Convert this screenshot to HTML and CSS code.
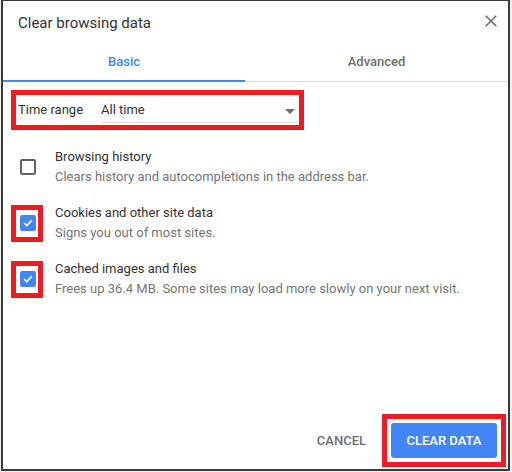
FILE: index.html
```html
<!DOCTYPE html>
<html lang="en">
<head>
<meta charset="utf-8">
<title>Clear browsing data</title>
<link rel="stylesheet" href="styles.css">
</head>
<body>
<div class="dialog">
  <div class="title-row">
    <span class="title">Clear browsing data</span>
    <svg class="close" width="12" height="12" viewBox="0 0 12 12" aria-label="Close">
      <path d="M0.7 0.7 L11.3 11.3 M11.3 0.7 L0.7 11.3" stroke="#6b6b6b" stroke-width="1.6" fill="none"/>
    </svg>
  </div>
  <div class="tabs">
    <div class="tab tab-active">Basic</div>
    <div class="tab">Advanced</div>
  </div>
  <div class="time-row highlight">
    <span class="time-label">Time range</span>
    <div class="select">
      <span>All time</span>
      <span class="arrow"></span>
    </div>
  </div>
  <div class="item">
    <div class="cb-wrap"><span class="cb"></span></div>
    <div class="item-text">
      <div class="item-title">Browsing history</div>
      <div class="item-sub">Clears history and autocompletions in the address bar.</div>
    </div>
  </div>
  <div class="item">
    <div class="cb-wrap highlight"><span class="cb cb-on"><svg width="12" height="12" viewBox="0 0 12 12"><path d="M2.2 6.2 L4.8 8.6 L9.8 3.4" stroke="#fff" stroke-width="1.8" fill="none"/></svg></span></div>
    <div class="item-text">
      <div class="item-title">Cookies and other site data</div>
      <div class="item-sub">Signs you out of most sites.</div>
    </div>
  </div>
  <div class="item">
    <div class="cb-wrap highlight"><span class="cb cb-on"><svg width="12" height="12" viewBox="0 0 12 12"><path d="M2.2 6.2 L4.8 8.6 L9.8 3.4" stroke="#fff" stroke-width="1.8" fill="none"/></svg></span></div>
    <div class="item-text">
      <div class="item-title">Cached images and files</div>
      <div class="item-sub">Frees up 36.4 MB. Some sites may load more slowly on your next visit.</div>
    </div>
  </div>
  <div class="footer">
    <span class="btn-cancel">CANCEL</span>
    <span class="btn-frame highlight"><span class="btn-clear">CLEAR DATA</span></span>
  </div>
</div>
</body>
</html>
```
FILE: styles.css
```css
html, body {
  margin: 0;
  padding: 0;
  background: #f0f0f0;
}
body {
  width: 512px;
  height: 472px;
  font-family: Roboto, "Liberation Sans", Arial, sans-serif;
  color: #333333;
}
.dialog {
  box-sizing: border-box;
  width: 509px;
  height: 471px;
  margin-left: 1px;
  background: #ffffff;
  border-top: 1px solid #3a3a3a;
  border-left: 2px solid #3a3a3a;
  border-right: 2px solid #3a3a3a;
  border-bottom: 2px solid #3a3a3a;
  display: flex;
  flex-direction: column;
}
.title-row {
  height: 44px;
  display: flex;
  align-items: center;
  justify-content: space-between;
  padding: 0 11px 0 15px;
}
.title {
  font-size: 15px;
  line-height: 44px;
  color: #333333;
}
.close {
  display: block;
  margin-bottom: 4px;
}
.tabs {
  display: flex;
  height: 37px;
  box-shadow: inset 0 -1px 0 #e0e0e0;
}
.tab {
  box-sizing: border-box;
  height: 37px;
  line-height: 33px;
  font-size: 13px;
  font-weight: 500;
  color: #6e6e6e;
  text-align: center;
  flex: 1;
}
.tab-active {
  flex: 0 0 242px;
  color: #4285f4;
  border-bottom: 2px solid #4285f4;
}
.highlight {
  outline: 5px solid #ec1c24;
}
.time-row {
  display: flex;
  width: 283px;
  height: 30px;
  margin: 13px 0 0 13px;
  font-size: 13px;
}
.time-label {
  flex: 0 0 83px;
  padding-left: 2px;
  line-height: 30px;
}
.select {
  box-sizing: border-box;
  width: 196px;
  height: 28px;
  padding-top: 1px;
  line-height: 27px;
  border-bottom: 1px solid #dcdcdc;
  display: flex;
  justify-content: space-between;
  align-items: center;
}
.arrow {
  width: 0;
  height: 0;
  border-left: 5px solid transparent;
  border-right: 5px solid transparent;
  border-top: 5px solid #6e6e6e;
  margin: 4px 2px 0 0;
}
.item {
  display: flex;
  align-items: center;
  height: 40px;
  margin-top: 16px;
}
.time-row + .item {
  margin-top: 22px;
}
.cb-wrap {
  width: 22px;
  height: 27px;
  margin-left: 13px;
  display: flex;
  align-items: center;
  justify-content: center;
  flex: 0 0 auto;
}
.cb {
  box-sizing: border-box;
  width: 16px;
  height: 16px;
  border: 2px solid #5f6368;
  border-radius: 2px;
  margin-left: 1px;
  display: flex;
  align-items: center;
  justify-content: center;
}
.cb-on {
  background: #4285f4;
  border-color: #4285f4;
}
.cb-on svg {
  display: block;
}
.item-text {
  margin-left: 17px;
  font-size: 13px;
  line-height: 20px;
}
.item-title {
  color: #333333;
}
.item-sub {
  color: #757575;
}
.footer {
  margin-top: auto;
  display: flex;
  justify-content: flex-end;
  align-items: center;
  padding: 0 7px 7px 0;
}
.btn-cancel {
  font-size: 13px;
  font-weight: 500;
  color: #6e6e6e;
  margin-right: 21px;
  line-height: 35px;
}
.btn-frame {
  display: flex;
  padding: 4px;
}
.btn-clear {
  box-sizing: border-box;
  width: 106px;
  height: 35px;
  line-height: 35px;
  border-radius: 3px;
  background: #4285f4;
  color: #ffffff;
  font-size: 13px;
  font-weight: 500;
  text-align: center;
}
```
